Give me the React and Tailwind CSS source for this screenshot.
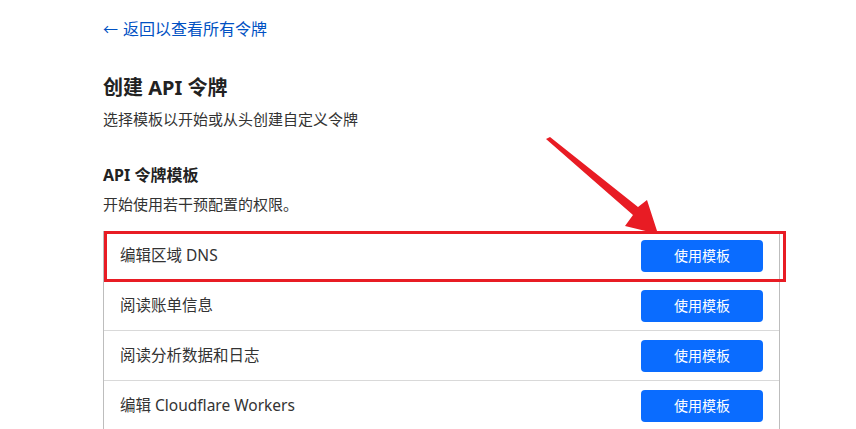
const font = { fontFamily: '"Noto Sans", "Noto Sans CJK SC", sans-serif' }

const templates = ['编辑区域 DNS', '阅读账单信息', '阅读分析数据和日志', '编辑 Cloudflare Workers']

function TemplateRow({ label }) {
  return (
    <div className="flex h-[50px] items-center justify-between border-b border-[#d9d9d9] pl-4 pr-4">
      <span className="text-[15.5px] text-[#333]">{label}</span>
      <button
        type="button"
        className="flex h-8 w-[122px] items-center justify-center rounded-[4px] bg-[#0a6cff] text-[14px] text-white"
      >
        使用模板
      </button>
    </div>
  )
}

export default function App() {
  return (
    <div className="relative h-[429px] w-[856px] overflow-hidden bg-white" style={font}>
      <div className="w-[677px] pl-[103px] pt-[17px] box-content">
        <a href="#" className="flex items-center gap-[5px] text-[16px] leading-6 text-[#0051c3]">
          <span className="text-[15px]">←</span>
          <span>返回以查看所有令牌</span>
        </a>

        <h1 className="mt-[33px] text-[20px] font-bold leading-7 text-[#222]">创建 API 令牌</h1>
        <p className="mt-[6px] text-[15px] leading-[22px] text-[#333]">
          选择模板以开始或从头创建自定义令牌
        </p>

        <h2 className="mt-[33px] text-[16px] font-bold leading-6 text-[#222]">API 令牌模板</h2>
        <p className="mt-[6px] text-[15px] leading-[22px] text-[#333]">开始使用若干预配置的权限。</p>

        <div className="mt-4 border-x border-[#bdbdbd]">
          {templates.map((t) => (
            <TemplateRow key={t} label={t} />
          ))}
        </div>
      </div>

      {/* annotation overlay */}
      <div className="absolute left-[104px] top-[231px] h-[51px] w-[682px] border-[3px] border-[#e81c24]" />
      <svg className="absolute left-0 top-0" width="856" height="429" viewBox="0 0 856 429">
        <polygon points="546,139 550,137 638,207 647,200 658,234 625,226 633,215" fill="#e81c24" />
      </svg>
    </div>
  )
}
